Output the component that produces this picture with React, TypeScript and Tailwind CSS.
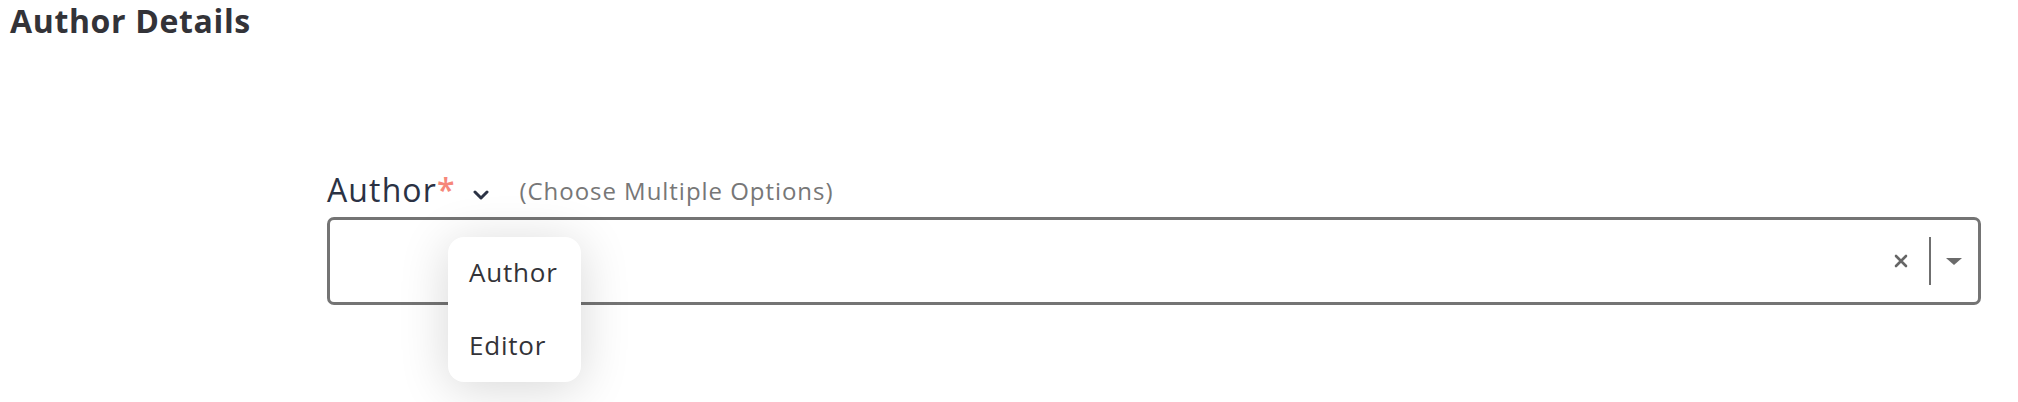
const font = { fontFamily: '"Open Sans", "Noto Sans", sans-serif' }

const App = () => {
  return (
    <div className="w-[2018px] h-[402px] bg-white overflow-hidden" style={font}>
      <h2 className="pl-[10px] pt-[5px] text-[32px] leading-none font-bold tracking-[0.02em] text-[#333338]">
        Author Details
      </h2>

      <div className="pl-[327px] pr-[37px] mt-[137px]">
        <div className="flex items-baseline">
          <span className="text-[32px] leading-none font-medium tracking-[0.035em] text-[#2b3244]">Author</span>
          <span className="text-[32px] leading-none font-semibold text-[#f6877a]">*</span>
          <svg className="ml-[19px] self-center mt-[10px]" width="16" height="10" viewBox="0 0 16 10">
            <polyline points="2,2 8,8 14,2" fill="none" stroke="#2b3244" strokeWidth="3" strokeLinecap="round" strokeLinejoin="round" />
          </svg>
          <span className="relative -top-[2px] ml-[30px] text-[24px] leading-none tracking-[0.04em] text-[#777777]">
            (Choose Multiple Options)
          </span>
        </div>

        <div className="relative mt-[11px]">
          <div className="h-[88px] border-[3px] border-[#747474] rounded-[7px] flex items-center justify-end pr-[16px]">
            <svg width="14" height="14" viewBox="0 0 14 14">
              <path d="M2 2 L12 12 M12 2 L2 12" stroke="#666" strokeWidth="2.6" strokeLinecap="round" />
            </svg>
            <div className="ml-[21px] w-[2px] h-[48px] bg-[#6f6f6f]" />
            <svg className="ml-[15px]" width="16" height="7" viewBox="0 0 16 7">
              <path d="M0 0 L16 0 L8 7 Z" fill="#6b6b6b" />
            </svg>
          </div>

          <div className="absolute left-[121px] top-[20px] w-[133px] bg-white rounded-[16px] shadow-[0_6px_50px_rgba(0,0,0,0.16)]">
            <div className="h-[73px] pt-[17px] pl-[21px] text-[26px] leading-[36px] tracking-[0.03em] text-[#333338]">Author</div>
            <div className="h-[72px] pt-[17px] pl-[21px] text-[26px] leading-[36px] tracking-[0.03em] text-[#333338]">Editor</div>
          </div>
        </div>
      </div>
    </div>
  )
}

export default App
